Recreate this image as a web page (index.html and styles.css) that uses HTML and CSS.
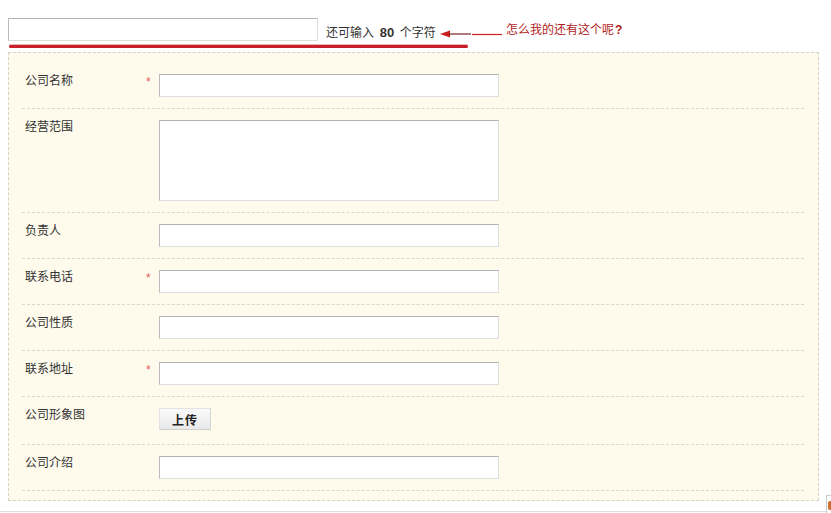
FILE: index.html
```html
<!DOCTYPE html>
<html lang="zh-CN">
<head>
<meta charset="utf-8">
<title>表单</title>
<link rel="stylesheet" href="styles.css">
</head>
<body>
<div class="page">
  <div class="counter">
    <div class="counter-row">
      <input class="text-input wide" type="text">
      <span class="hint">还可输入 <b class="num">80</b> 个字符</span>
      <svg class="arrow" width="62" height="8" viewBox="0 0 62 8">
        <path d="M0 4 L10 0.5 L10 7.5 Z" fill="#c81e1e"/>
        <line x1="9" y1="4" x2="31" y2="4" stroke="#7a2020" stroke-width="1.2"/>
        <line x1="32" y1="4.5" x2="62" y2="4.5" stroke="#c81e1e" stroke-width="1.2"/>
      </svg>
      <span class="note">怎么我的还有这个呢<b>?</b></span>
    </div>
    <div class="underline"></div>
  </div>

  <div class="form-box">
    <div class="row">
      <div class="label">公司名称<span class="req">*</span></div>
      <input class="text-input field" type="text">
    </div>
    <div class="row">
      <div class="label">经营范围</div>
      <textarea class="text-input area"></textarea>
    </div>
    <div class="row">
      <div class="label">负责人</div>
      <input class="text-input field" type="text">
    </div>
    <div class="row">
      <div class="label">联系电话<span class="req">*</span></div>
      <input class="text-input field" type="text">
    </div>
    <div class="row">
      <div class="label">公司性质</div>
      <input class="text-input field" type="text">
    </div>
    <div class="row">
      <div class="label">联系地址<span class="req">*</span></div>
      <input class="text-input field" type="text">
    </div>
    <div class="row row-upload">
      <div class="label">公司形象图</div>
      <button class="upload" type="button">上传</button>
    </div>
    <div class="row">
      <div class="label">公司介绍</div>
      <input class="text-input field" type="text">
    </div>
  </div>

  <div class="footer">
    <div class="corner"><span class="corner-mark"></span></div>
  </div>
</div>
</body>
</html>
```
FILE: styles.css
```css
html, body {
  margin: 0;
  padding: 0;
  background: #ffffff;
}
body {
  font-family: "Noto Sans CJK SC", "Liberation Sans", sans-serif;
  font-size: 12px;
  color: #333333;
  width: 831px;
  height: 513px;
  overflow: hidden;
}
.page {
  padding: 18px 0 0 8px;
}
.counter-row {
  display: flex;
  align-items: center;
  height: 23px;
}
.text-input {
  box-sizing: border-box;
  background: #ffffff;
  border: 1px solid #c9c9c9;
  border-top-color: #b4b4b4;
  border-left-color: #bcbcbc;
  border-bottom-color: #dedede;
  border-right-color: #dcdcdc;
  margin: 0;
  padding: 2px 4px;
  font: inherit;
  outline: none;
}
.wide {
  width: 310px;
  height: 23px;
}
.hint {
  margin-left: 8px;
  margin-top: 5px;
  color: #333333;
  line-height: 14px;
  white-space: nowrap;
}
.num {
  font-family: "Liberation Sans", sans-serif;
  font-size: 13px;
  font-weight: bold;
  margin: 0 3px;
}
.arrow {
  margin-left: 4px;
  margin-top: 8px;
}
.note {
  margin-left: 4px;
  margin-top: 0;
  color: #b01c1c;
  line-height: 14px;
  white-space: nowrap;
}
.note b {
  font-family: "Liberation Sans", sans-serif;
  font-weight: bold;
  margin-left: 1px;
}
.underline {
  width: 459px;
  height: 3px;
  margin: 4px 0 0 1px;
  background: #c8202a;
  border-radius: 2px;
  box-shadow: 0 -1px 0 #eab4b4;
}
.form-box {
  width: 811px;
  box-sizing: border-box;
  margin-top: 4px;
  background: #fefaec;
  border: 1px dashed #d6d1c2;
  padding: 10px 14px 9px 13px;
}
.row {
  display: flex;
  align-items: flex-start;
  padding: 11px 0;
  border-bottom: 1px dashed #dcd6c4;
}
.row-upload {
  padding-bottom: 14px;
}
.label {
  position: relative;
  width: 137px;
  flex: none;
  box-sizing: border-box;
  padding-left: 3px;
  padding-top: 0;
  line-height: 12px;
  color: #333333;
}
.req {
  position: absolute;
  left: 124px;
  top: 2px;
  color: #e05a5a;
  font-family: "Liberation Sans", sans-serif;
  font-size: 12px;
}
.field {
  width: 340px;
  height: 23px;
}
.area {
  width: 340px;
  height: 81px;
  resize: none;
  display: block;
}
.upload {
  width: 52px;
  height: 22px;
  padding: 0;
  margin: 0;
  border: 1px solid #e2e2e2;
  border-bottom-color: #cfcfcf;
  border-right-color: #d5d5d5;
  background: linear-gradient(#fafafa, #e9e9e9);
  font-family: "Noto Sans CJK SC", sans-serif;
  font-size: 12px;
  font-weight: bold;
  color: #222222;
  letter-spacing: 1px;
}
.footer {
  position: relative;
  margin: 10px 0 0 -8px;
  height: 1px;
  background: #dddddd;
}
.corner {
  position: absolute;
  right: 0;
  top: -16px;
  width: 4px;
  height: 24px;
  border-left: 1px solid #cccccc;
  border-top: 1px solid #cccccc;
  background: #ffffff;
}
.corner-mark {
  position: absolute;
  left: 1px;
  top: 5px;
  width: 3px;
  height: 9px;
  background: #d07030;
  border-radius: 2px 0 0 2px;
}
```
